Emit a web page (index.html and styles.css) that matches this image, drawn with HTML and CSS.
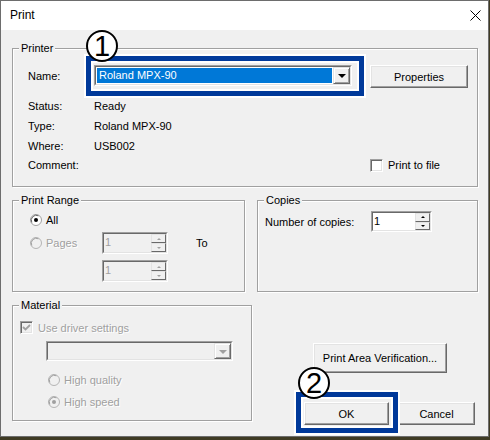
FILE: index.html
```html
<!DOCTYPE html>
<html>
<head>
<meta charset="utf-8">
<link rel="stylesheet" href="styles.css">
</head>
<body>
<div class="window">
  <div class="titlebar">
    <span class="title">Print</span>
    <svg class="close" width="11" height="11" viewBox="0 0 11 11"><path d="M0.5 0.5 L10.5 10.5 M10.5 0.5 L0.5 10.5" stroke="#000" stroke-width="1" fill="none"/></svg>
  </div>
  <div class="content">
    <div class="group printer">
      <span class="legend">Printer</span>
      <div class="prow name-row">
        <span class="lbl name-lbl">Name:</span>
        <div class="combo">
          <div class="combo-in">
            <div class="combo-sel">Roland MPX-90</div>
            <div class="drop"><span class="tri"></span></div>
          </div>
        </div>
        <div class="btn props">Properties</div>
      </div>
      <div class="prow r1"><span class="lbl">Status:</span><span>Ready</span></div>
      <div class="prow r2"><span class="lbl">Type:</span><span>Roland MPX-90</span></div>
      <div class="prow r3"><span class="lbl">Where:</span><span>USB002</span></div>
      <div class="prow r4"><span class="lbl">Comment:</span>
        <div class="chkline ptf"><span class="chk"></span><span>Print to file</span></div>
      </div>
    </div>

    <div class="mid">
      <div class="group range">
        <span class="legend">Print Range</span>
        <div class="rrow all-row">
          <svg class="radio" width="12" height="12" viewBox="0 0 12 12"><circle cx="6" cy="6" r="5.5" fill="#fff" stroke="#a0a0a0"/><path d="M1.8 8.5 A5 5 0 0 1 8.5 1.8" stroke="#696969" fill="none"/><circle cx="6" cy="6" r="2" fill="#000"/></svg>
          <span class="rtext">All</span>
        </div>
        <div class="rrow pages-row">
          <div class="pages-lbl">
            <svg class="radio" width="12" height="12" viewBox="0 0 12 12"><circle cx="6" cy="6" r="5.5" fill="#f0f0f0" stroke="#b4b4b4"/><path d="M1.8 8.5 A5 5 0 0 1 8.5 1.8" stroke="#a0a0a0" fill="none"/></svg>
            <span class="rtext dis">Pages</span>
          </div>
          <div class="spin dspin">
            <div class="spin-in">
              <div class="spin-val">1</div>
              <div class="spin-btns"><div class="sbtn"><span class="up"></span></div><div class="sbtn"><span class="dn"></span></div></div>
            </div>
          </div>
          <span class="to">To</span>
        </div>
        <div class="rrow pages2-row">
          <div class="spin dspin">
            <div class="spin-in">
              <div class="spin-val">1</div>
              <div class="spin-btns"><div class="sbtn"><span class="up"></span></div><div class="sbtn"><span class="dn"></span></div></div>
            </div>
          </div>
        </div>
      </div>
      <div class="group copies">
        <span class="legend">Copies</span>
        <div class="crow">
          <span class="clbl">Number of copies:</span>
          <div class="spin cspin">
            <div class="spin-in">
              <div class="spin-val">1</div>
              <div class="spin-btns"><div class="sbtn"><span class="up"></span></div><div class="sbtn"><span class="dn"></span></div></div>
            </div>
          </div>
        </div>
      </div>
    </div>

    <div class="bottom">
      <div class="group material">
        <span class="legend">Material</span>
        <div class="chkline mchk">
          <span class="chk dchk"><svg width="9" height="9" viewBox="0 0 9 9"><path d="M1 4 L3.5 6.5 L8 2" stroke="#a0a0a0" stroke-width="1.8" fill="none"/></svg></span>
          <span class="dis">Use driver settings</span>
        </div>
        <div class="combo dcombo">
          <div class="combo-in">
            <div class="combo-empty"></div>
            <div class="drop"><span class="tri gtri"></span></div>
          </div>
        </div>
        <div class="rrow mrad1">
          <svg class="radio" width="12" height="12" viewBox="0 0 12 12"><circle cx="6" cy="6" r="5.5" fill="#f0f0f0" stroke="#b4b4b4"/><path d="M1.8 8.5 A5 5 0 0 1 8.5 1.8" stroke="#a0a0a0" fill="none"/></svg>
          <span class="rtext dis">High quality</span>
        </div>
        <div class="rrow mrad2">
          <svg class="radio" width="12" height="12" viewBox="0 0 12 12"><circle cx="6" cy="6" r="5.5" fill="#f0f0f0" stroke="#b4b4b4"/><path d="M1.8 8.5 A5 5 0 0 1 8.5 1.8" stroke="#a0a0a0" fill="none"/><circle cx="6" cy="6" r="2" fill="#a0a0a0"/></svg>
          <span class="rtext dis">High speed</span>
        </div>
      </div>
      <div class="actions">
        <div class="btn pav">Print Area Verification...</div>
        <div class="okrow">
          <div class="btn ok">OK</div>
          <div class="btn cancel">Cancel</div>
        </div>
      </div>
    </div>
  </div>

  <div class="mark-box box1"></div>
  <div class="mark-num num1">1</div>
  <div class="mark-box box2"></div>
  <div class="mark-num num2">2</div>
</div>
</body>
</html>
```

FILE: styles.css
```css
* { box-sizing: border-box; }
html, body { margin: 0; padding: 0; }
body {
  width: 490px;
  height: 440px;
  overflow: hidden;
  background: #3f3b24;
  font-family: "Liberation Sans", Arial, sans-serif;
  font-size: 11px;
  color: #000;
}
.window {
  position: relative;
  width: 489px;
  height: 437px;
  border: 1px solid #6d6d6d;
  background: #f0f0f0;
  display: flex;
  flex-direction: column;
}
.titlebar {
  height: 29px;
  flex: none;
  background: #fff;
  display: flex;
  align-items: center;
  justify-content: space-between;
  padding: 0 7px 0 9px;
}
.title { font-size: 12px; line-height: 29px; }
.close { display: block; }

.content {
  flex: 1;
  display: flex;
  flex-direction: column;
  padding: 18px 0 0 11px;
}
.group {
  border: 1px solid #a0a0a0;
  box-shadow: 1px 1px 0 #fff, inset 1px 1px 0 #fff;
  display: flex;
  flex-direction: column;
  flex: none;
}
.legend {
  align-self: flex-start;
  margin: -7px 0 0 6px;
  padding: 0 2px;
  height: 13px;
  line-height: 13px;
  background: #f0f0f0;
}
.dis { color: #a0a0a0; text-shadow: 1px 1px 0 #fff; }

/* Printer group */
.printer { width: 466px; height: 139px; }
.prow { display: flex; align-items: center; margin-left: 15px; }
.lbl { width: 66px; flex: none; }
.name-row { margin-top: 10px; height: 23px; align-items: flex-start; }
.name-lbl { line-height: 23px; }
.r1 { margin-top: 7px; height: 21px; }
.r2 { height: 20px; }
.r3 { height: 19px; }
.r4 { height: 20px; }

.combo {
  width: 258px;
  height: 21px;
  border: 1px solid;
  border-color: #a0a0a0 #fff #fff #a0a0a0;
  flex: none;
}
.combo-in {
  height: 100%;
  border: 1px solid;
  border-color: #696969 #e3e3e3 #e3e3e3 #696969;
  background: #fff;
  display: flex;
}
.combo-sel {
  flex: 1;
  margin: 1px;
  background: #0078d7;
  color: #fff;
  line-height: 15px;
  padding-left: 2px;
}
.combo-empty { flex: 1; }
.drop {
  width: 17px;
  flex: none;
  border: 1px solid;
  border-color: #e3e3e3 #696969 #696969 #e3e3e3;
  box-shadow: inset 1px 1px 0 #fff, inset -1px -1px 0 #a0a0a0;
  background: #f0f0f0;
  display: flex;
  align-items: center;
  justify-content: center;
}
.tri {
  width: 0; height: 0;
  border-left: 4px solid transparent;
  border-right: 4px solid transparent;
  border-top: 4px solid #000;
  margin-top: 1px;
}
.gtri { border-top-color: #a0a0a0; }

.btn {
  border: 1px solid;
  border-color: #fff #696969 #696969 #fff;
  box-shadow: inset -1px -1px 0 #a0a0a0, inset 1px 1px 0 #e3e3e3;
  background: #f0f0f0;
  display: flex;
  align-items: center;
  justify-content: center;
  flex: none;
}
.props { margin-left: 18px; width: 98px; height: 23px; }

.chkline { display: flex; align-items: center; }
.chk {
  width: 13px; height: 13px;
  flex: none;
  border: 1px solid;
  border-color: #a0a0a0 #fff #fff #a0a0a0;
  box-shadow: inset 1px 1px 0 #696969, inset -1px -1px 0 #e3e3e3;
  background: #fff;
  margin-right: 5px;
  display: flex;
  align-items: center;
  justify-content: center;
}
.dchk { background: #f0f0f0; }
.ptf { margin-left: 276px; }

/* middle */
.mid { display: flex; gap: 12px; margin-top: 13px; }
.range { width: 233px; height: 92px; }
.copies { width: 221px; height: 92px; }
.rrow { display: flex; align-items: center; margin-left: 17px; }
.radio { display: block; flex: none; margin-right: 4px; }
.all-row { margin-top: 5px; height: 16px; }
.pages-row { margin-top: 4px; height: 22px; }
.pages-lbl { width: 72px; display: flex; align-items: center; }
.pages2-row { margin-top: 6px; height: 22px; margin-left: 89px; }
.to { margin-left: 28px; }

.spin {
  width: 66px; height: 22px;
  flex: none;
  border: 1px solid;
  border-color: #a0a0a0 #fff #fff #a0a0a0;
}
.spin-in {
  height: 100%;
  display: flex;
  border: 1px solid;
  border-color: #696969 #e3e3e3 #e3e3e3 #696969;
  background: #fff;
}
.spin-val { flex: 1; padding-left: 1px; line-height: 17px; }
.spin-btns { width: 15px; display: flex; flex-direction: column; flex: none; }
.sbtn {
  flex: 1;
  border: 1px solid;
  border-color: #e3e3e3 #696969 #696969 #e3e3e3;
  background: #f0f0f0;
  display: flex;
  align-items: center;
  justify-content: center;
}
.up, .dn {
  width: 0; height: 0;
  border-left: 2px solid transparent;
  border-right: 2px solid transparent;
}
.up { border-bottom: 2px solid #000; }
.dn { border-top: 2px solid #000; }
.dspin .spin-in { background: #f0f0f0; }
.dspin .spin-val { color: #a0a0a0; }
.dspin .up { border-bottom-color: #a0a0a0; }
.dspin .dn { border-top-color: #a0a0a0; }

.crow { display: flex; align-items: center; margin: 4px 0 0 7px; height: 21px; }
.clbl { width: 106px; flex: none; }
.cspin { width: 61px; height: 21px; }

/* bottom */
.bottom { display: flex; margin-top: 13px; }
.material { width: 240px; height: 116px; }
.mchk { margin: 8px 0 0 7px; height: 15px; }
.dcombo { width: 187px; height: 20px; margin: 6px 0 0 33px; }
.dcombo .combo-in { background: #f0f0f0; }
.mrad1 { margin: 11px 0 0 35px; height: 16px; }
.mrad2 { margin: 6px 0 0 35px; height: 16px; }

.actions { flex: 1; display: flex; flex-direction: column; }
.pav { margin: 38px 0 0 61px; width: 134px; height: 30px; }
.okrow { display: flex; margin: 29px 0 0 52px; }
.ok { width: 85px; height: 23px; }
.cancel { width: 77px; height: 23px; margin-left: 9px; }

/* annotations */
.mark-box {
  position: absolute;
  border: 5px solid #00399a;
  outline: 2px solid #fff;
  box-shadow: inset 0 0 0 2px #fff;
}
.box1 { left: 85px; top: 55px; width: 278px; height: 40px; }
.box2 { left: 295px; top: 391px; width: 102px; height: 41px; }
.mark-num {
  position: absolute;
  width: 32px; height: 32px;
  border: 2px solid #000;
  border-radius: 50%;
  background: #fff;
  font-size: 29px;
  line-height: 28px;
  text-align: center;
  color: #000;
}
.num1 { left: 85px; top: 29px; }
.num2 { left: 297px; top: 366px; }
```
